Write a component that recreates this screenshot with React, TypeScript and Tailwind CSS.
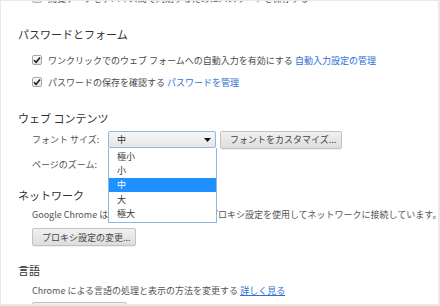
import React from "react";

const FONT = { fontFamily: '"Noto Sans CJK JP", "Noto Sans", sans-serif' };

function Check() {
  return (
    <span className="w-[10px] h-[10px] border border-[#a6a6a6] rounded-[2px] bg-gradient-to-b from-[#fcfcfc] to-[#e4e4e4] flex items-center justify-center shrink-0">
      <svg width="8" height="8" viewBox="0 0 8 8">
        <path d="M1 4.2 L3.1 6.3 L7 1.4" fill="none" stroke="#222" strokeWidth="1.6" />
      </svg>
    </span>
  );
}

function Heading({ children, className = "" }: { children: React.ReactNode; className?: string }) {
  return (
    <div className={`h-[14px] flex items-center text-[11px] text-[#303030] pl-[17px] ${className}`}>
      {children}
    </div>
  );
}

function Button({ children, className = "" }: { children: React.ReactNode; className?: string }) {
  return (
    <div
      className={`h-[18px] border border-[#c3c3c3] rounded-[2px] bg-gradient-to-b from-[#f1f1f1] to-[#dddddd] shadow-[0_1px_0_rgba(0,0,0,0.06)] flex items-center text-[9px] text-[#444] ${className}`}
    >
      {children}
    </div>
  );
}

const SIZES = ["極小", "小", "中", "大", "極大"];

export default function App() {
  return (
    <div style={FONT} className="w-[440px] h-[306px] bg-[#e9e9e9] p-[1px] pr-[2px] pb-[2px] overflow-hidden">
      <div className="relative w-full h-full bg-white overflow-hidden text-[9px] text-[#4a4a4a] leading-none">
        {/* cut-off row from above */}
        <div className="h-[14px] -mt-[10px] flex items-center gap-[6px] pl-[31px]">
          <span className="w-[10px] h-[10px] border border-[#b5b5b5] rounded-[2px] bg-gradient-to-b from-[#fcfcfc] to-[#e4e4e4]" />
          <span className="whitespace-nowrap">閲覧データをデバイス間で同期するためにパスワードを保存する</span>
        </div>

        <Heading className="mt-[22px]">パスワードとフォーム</Heading>

        <div className="mt-[12px] h-[14px] flex items-center gap-[6px] pl-[31px] whitespace-nowrap">
          <Check />
          <span>
            ワンクリックでのウェブ フォームへの自動入力を有効にする{" "}
            <span className="text-[#2d6fd6]">自動入力設定の管理</span>
          </span>
        </div>
        <div className="mt-[8px] h-[14px] flex items-center gap-[6px] pl-[31px] whitespace-nowrap">
          <Check />
          <span>
            パスワードの保存を確認する <span className="text-[#2d6fd6]">パスワードを管理</span>
          </span>
        </div>

        <Heading className="mt-[22px]">ウェブ コンテンツ</Heading>

        <div className="mt-[6px] h-[17px] flex items-center pl-[31px]">
          <span className="w-[76px] text-[#555]">フォント サイズ:</span>
          <div className="w-[108px] h-[17px] border border-[#8db6e6] rounded-[2px] bg-gradient-to-b from-[#f7f7f7] to-[#e6e6e6] flex items-center justify-between pl-[8px] pr-[4px]">
            <span className="text-[#333]">中</span>
            <svg width="7" height="4" viewBox="0 0 7 4">
              <path d="M0 0 H7 L3.5 4 Z" fill="#111" />
            </svg>
          </div>
          <Button className="ml-[4px] w-[122px] pl-[9px]">フォントをカスタマイズ...</Button>
        </div>

        <div className="mt-[8px] h-[17px] flex items-center pl-[31px]">
          <span className="w-[76px] text-[#555]">ページのズーム:</span>
          <div className="w-[108px] h-[17px] border border-[#c3c3c3] rounded-[2px] bg-gradient-to-b from-[#f7f7f7] to-[#e6e6e6]" />
        </div>

        <Heading className="mt-[15px]">ネットワーク</Heading>

        <div className="mt-[5px] h-[14px] flex items-center pl-[31px] whitespace-nowrap text-[#555]">
          Google Chrome は、パソコンのシステムの プロキシ設定を使用してネットワークに接続しています。
        </div>

        <Button className="mt-[7px] ml-[31px] w-[104px] pl-[9px]">プロキシ設定の変更...</Button>

        <Heading className="mt-[17px]">言語</Heading>

        <div className="mt-[6px] h-[14px] flex items-center pl-[31px] whitespace-nowrap text-[#555]">
          Chrome による言語の処理と表示の方法を変更する&nbsp;
          <span className="text-[#2d6fd6] underline">詳しく見る</span>
        </div>

        <Button className="mt-[5px] ml-[31px] w-[95px]">&nbsp;</Button>

        {/* open font size dropdown */}
        <div className="absolute left-[107px] top-[147px] w-[109px] bg-white border border-[#8db6e6] border-t-0 py-[1px]">
          {SIZES.map((s) => (
            <div
              key={s}
              className={`h-[14.4px] flex items-center pl-[8px] ${s === "中" ? "bg-[#1e90ff] text-white" : "text-[#333]"}`}
            >
              {s}
            </div>
          ))}
        </div>
      </div>
    </div>
  );
}
